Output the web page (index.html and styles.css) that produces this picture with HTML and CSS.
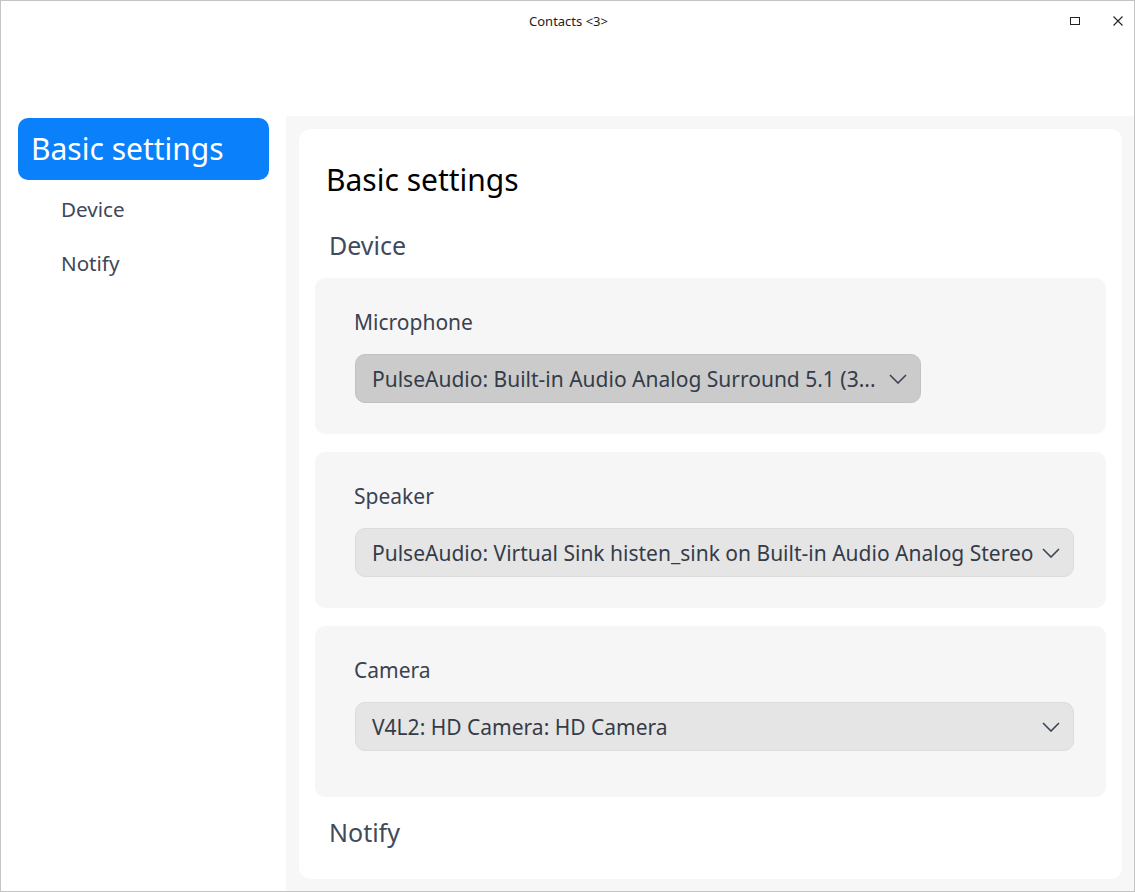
FILE: index.html
```html
<!DOCTYPE html>
<html lang="en">
<head>
<meta charset="utf-8">
<title>Contacts &lt;3&gt;</title>
<link rel="stylesheet" href="styles.css">
</head>
<body>
<div class="window">
  <header class="titlebar">
    <div class="title">Contacts &lt;3&gt;</div>
    <div class="controls">
      <svg class="ctl" width="14" height="14" viewBox="0 0 14 14"><rect x="2.5" y="3.5" width="9" height="7" fill="none" stroke="#222" stroke-width="1"/></svg>
      <svg class="ctl" width="14" height="14" viewBox="0 0 14 14"><path d="M2.5 2.5 L11.5 11.5 M11.5 2.5 L2.5 11.5" stroke="#222" stroke-width="1.1" fill="none"/></svg>
    </div>
  </header>
  <div class="body">
    <nav class="sidebar">
      <div class="nav-active">Basic settings</div>
      <div class="nav-item">Device</div>
      <div class="nav-item">Notify</div>
    </nav>
    <main class="main">
      <div class="card">
        <h1 class="heading">Basic settings</h1>
        <h2 class="subheading">Device</h2>
        <section class="group">
          <div class="label">Microphone</div>
          <div class="select select-hover select-short">
            <span class="select-text">PulseAudio: Built-in Audio Analog Surround 5.1 (3...</span>
            <svg class="chev" width="18" height="10" viewBox="0 0 18 10"><path d="M1 1 L9 9 L17 1" fill="none" stroke="#3c4352" stroke-width="1.6"/></svg>
          </div>
        </section>
        <section class="group">
          <div class="label">Speaker</div>
          <div class="select">
            <span class="select-text">PulseAudio: Virtual Sink histen_sink on Built-in Audio Analog Stereo</span>
            <svg class="chev" width="18" height="10" viewBox="0 0 18 10"><path d="M1 1 L9 9 L17 1" fill="none" stroke="#3c4352" stroke-width="1.6"/></svg>
          </div>
        </section>
        <section class="group group-last">
          <div class="label">Camera</div>
          <div class="select">
            <span class="select-text">V4L2: HD Camera: HD Camera</span>
            <svg class="chev" width="18" height="10" viewBox="0 0 18 10"><path d="M1 1 L9 9 L17 1" fill="none" stroke="#3c4352" stroke-width="1.6"/></svg>
          </div>
        </section>
        <h2 class="subheading notify">Notify</h2>
      </div>
    </main>
  </div>
</div>
</body>
</html>
```
FILE: styles.css
```css
* { box-sizing: border-box; }
html, body { margin: 0; padding: 0; background: #ffffff; }
body { font-family: "Noto Sans", "Open Sans", sans-serif; }

.window {
  width: 1135px;
  height: 892px;
  border: 1px solid #c4c4c4;
  display: flex;
  flex-direction: column;
  background: #ffffff;
  overflow: hidden;
}

.titlebar {
  height: 115px;
  flex: none;
  position: relative;
}
.title {
  text-align: center;
  font-size: 13px;
  line-height: 16px;
  padding-top: 12px;
  color: #222222;
  padding-left: 2px;
}
.controls {
  position: absolute;
  top: 13px;
  right: 9px;
  display: flex;
  gap: 29px;
}
.ctl { display: block; }

.body {
  flex: 1;
  display: flex;
  min-height: 0;
}

.sidebar {
  width: 285px;
  flex: none;
  background: #ffffff;
  padding-top: 2px;
}
.nav-active {
  margin: 0 17px;
  height: 62px;
  border-radius: 10px;
  background: #0a81fb;
  color: #ffffff;
  font-size: 30px;
  line-height: 62px;
  padding-left: 13px;
  white-space: nowrap;
}
.nav-item {
  height: 54px;
  line-height: 54px;
  padding-left: 60px;
  font-size: 20.6px;
  color: #3f4758;
  margin-top: 2px;
  margin-bottom: -2px;
}

.main {
  flex: 1;
  background: #f7f7f7;
  padding: 13px 12px 12px 13px;
  min-width: 0;
}
.card {
  height: 100%;
  background: #ffffff;
  border-radius: 12px;
  padding: 31px 16px 0 16px;
}
.heading {
  margin: 0 0 0 11px;
  font-size: 30px;
  line-height: 40px;
  font-weight: 400;
  color: #000000;
}
.subheading {
  margin: 29px 0 17px 14px;
  font-size: 25px;
  line-height: 32px;
  font-weight: 400;
  color: #414a5b;
}
.subheading.notify { margin-top: 19px; }

.group {
  background: #f6f6f6;
  border-radius: 10px;
  padding: 30px 32px 31px 39px;
  margin-bottom: 18px;
}
.group-last { padding-bottom: 46px; margin-bottom: 0; }

.label {
  font-size: 21px;
  line-height: 28px;
  color: #3a4252;
}

.select {
  margin-top: 18px;
  margin-left: 1px;
  height: 49px;
  border-radius: 10px;
  background: #e5e5e5;
  border: 1px solid #dcdcdc;
  display: flex;
  align-items: center;
  padding: 0 13px 0 16px;
  color: #353c49;
  font-size: 21px;
}
.select-hover { background: #cbcbcb; border-color: #c2c2c2; }
.select-short { width: 566px; }
.select-text {
  flex: 1;
  white-space: nowrap;
  overflow: hidden;
}
.chev { flex: none; margin-left: 6px; }
```
